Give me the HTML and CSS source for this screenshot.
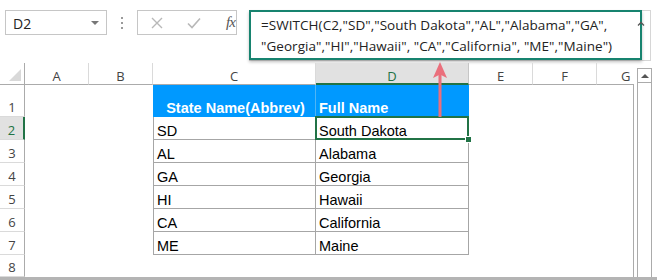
FILE: index.html
```html
<!DOCTYPE html>
<html lang="en">
<head>
  <meta charset="UTF-8" />
  <meta name="viewport" content="width=device-width, initial-scale=1.0" />
  <title>SWITCH function example</title>
  <link rel="stylesheet" href="styles.css">
</head>
<body>
  <div class="window">
    <!-- name box, buttons and formula bar -->
    <div class="toolbar">
      <div class="namebox">
        <span>D2</span>
        <span class="drop"></span>
      </div>
      <div class="grip"><i></i><i></i><i></i></div>
      <div class="fnbox">
        <svg class="btn" width="12" height="12" viewBox="0 0 12 12">
          <path d="M1 1 L11 11 M11 1 L1 11" stroke="#b8b8b8" stroke-width="1.4" fill="none" />
        </svg>
        <svg class="btn" width="14" height="12" viewBox="0 0 14 12">
          <path d="M1 6.5 L5 10.5 L13 1.5" stroke="#b8b8b8" stroke-width="1.6" fill="none" />
        </svg>
        <span class="fx">fx</span>
      </div>
      <div class="formula">
        <div class="formula-text">=SWITCH(C2,"SD","South Dakota","AL","Alabama","GA",<br>"Georgia","HI","Hawaii", "CA","California", "ME","Maine")</div>
        <svg class="expand" width="8" height="5" viewBox="0 0 8 5">
          <path d="M1 4.5 L4 1.5 L7 4.5" stroke="#555" stroke-width="1.3" fill="none" />
        </svg>
      </div>
    </div>

    <!-- worksheet -->
    <div class="sheet">
      <div class="grid">
        <div class="corner"><span class="tri"></span></div>
        <div class="colhead">A</div>
        <div class="colhead">B</div>
        <div class="colhead">C</div>
        <div class="colhead active">D</div>
        <div class="colhead">E</div>
        <div class="colhead">F</div>
        <div class="colhead last">G</div>

        <div class="rowhead tall">1</div>
        <div class="cell"></div>
        <div class="cell"></div>
        <div class="cell blue center">State Name(Abbrev)</div>
        <div class="cell blue">Full Name</div>
        <div class="cell"></div>
        <div class="cell"></div>
        <div class="cell"></div>

        <div class="rowhead active">2</div>
        <div class="cell"></div>
        <div class="cell"></div>
        <div class="cell abbr">SD</div>
        <div class="cell full sel">South Dakota</div>
        <div class="cell"></div>
        <div class="cell"></div>
        <div class="cell"></div>

        <div class="rowhead">3</div>
        <div class="cell"></div>
        <div class="cell"></div>
        <div class="cell abbr">AL</div>
        <div class="cell full">Alabama</div>
        <div class="cell"></div>
        <div class="cell"></div>
        <div class="cell"></div>

        <div class="rowhead">4</div>
        <div class="cell"></div>
        <div class="cell"></div>
        <div class="cell abbr">GA</div>
        <div class="cell full">Georgia</div>
        <div class="cell"></div>
        <div class="cell"></div>
        <div class="cell"></div>

        <div class="rowhead">5</div>
        <div class="cell"></div>
        <div class="cell"></div>
        <div class="cell abbr">HI</div>
        <div class="cell full">Hawaii</div>
        <div class="cell"></div>
        <div class="cell"></div>
        <div class="cell"></div>

        <div class="rowhead">6</div>
        <div class="cell"></div>
        <div class="cell"></div>
        <div class="cell abbr">CA</div>
        <div class="cell full">California</div>
        <div class="cell"></div>
        <div class="cell"></div>
        <div class="cell"></div>

        <div class="rowhead">7</div>
        <div class="cell"></div>
        <div class="cell"></div>
        <div class="cell abbr">ME</div>
        <div class="cell full">Maine</div>
        <div class="cell"></div>
        <div class="cell"></div>
        <div class="cell"></div>

        <div class="rowhead short">8</div>
        <div class="cell"></div>
        <div class="cell"></div>
        <div class="cell"></div>
        <div class="cell"></div>
        <div class="cell"></div>
        <div class="cell"></div>
        <div class="cell"></div>
      </div>

      <div class="vscroll">
        <div class="up"><span></span></div>
        <div class="track"></div>
      </div>

      <!-- pointer from the formula to the result cell -->
      <svg class="arrow" width="16" height="56" viewBox="0 0 16 56">
        <rect x="6.5" y="12" width="3" height="43" fill="#ea6f7c" />
        <path d="M8 0 L15 16 L8 12.5 L1 16 Z" fill="#ea6f7c" />
      </svg>
    </div>
  </div>
</body>
</html>
```

FILE: styles.css
```css
body {
  margin: 0;
  background: #ffffff;
  font-family: "Open Sans", "Noto Sans", sans-serif;
  color: #222;
  overflow: hidden;
}

.window {
  width: 657px;
  height: 280px;
}

/* ---------- toolbar ---------- */

.toolbar {
  height: 63px;
  display: flex;
  align-items: flex-start;
  padding-top: 10px;
  box-sizing: border-box;
}

.namebox {
  margin-left: 5px;
  width: 102px;
  height: 25px;
  box-sizing: border-box;
  border: 1px solid #c6c6c6;
  display: flex;
  align-items: center;
  justify-content: space-between;
  padding: 1px 7px 0 7px;
  font-size: 14px;
}

.drop {
  width: 0;
  height: 0;
  border-left: 4px solid transparent;
  border-right: 4px solid transparent;
  border-top: 4px solid #777;
}

.grip {
  width: 30px;
  height: 25px;
  display: flex;
  flex-direction: column;
  align-items: center;
  justify-content: center;
  gap: 3px;
}

.grip i {
  width: 2px;
  height: 2px;
  background: #9a9a9a;
}

.fnbox {
  width: 100px;
  height: 25px;
  box-sizing: border-box;
  border: 1px solid #c6c6c6;
  display: flex;
  align-items: center;
  padding-left: 13px;
}

.btn {
  margin-right: 24px;
}

.btn + .btn {
  margin-right: 25px;
}

.fx {
  font-family: "Liberation Serif", serif;
  font-style: italic;
  font-size: 15px;
  color: #555;
  letter-spacing: -1px;
}

.formula {
  position: relative;
  margin-left: 12px;
  width: 402px;
  height: 51px;
  box-sizing: border-box;
  border: 1px solid #d6d6d6;
  border-left: 0;
}

.formula-text {
  width: 393px;
  height: 50px;
  margin-top: -1px;
  box-sizing: border-box;
  border: 2px solid #17836f;
  box-shadow: 0 2px 3px rgba(0, 0, 0, 0.25);
  padding: 3px 0 0 10px;
  font-size: 13.5px;
  line-height: 21px;
  letter-spacing: 0.05px;
  color: #222;
  white-space: nowrap;
  background: #fff;
}

.expand {
  position: absolute;
  left: 388px;
  top: 10px;
}

/* ---------- sheet ---------- */

.sheet {
  position: relative;
  display: flex;
  height: 217px;
  box-sizing: border-box;
  border-bottom: 3px solid #b4b4b4;
}

.grid {
  width: 634px;
  overflow: hidden;
  display: grid;
  grid-template-columns: 25px 64px 64px 163px 153px 64px 64px 60px;
  grid-template-rows: 22px 32px repeat(6, 23px) 22px;
  font-family: "Liberation Sans", Arial, sans-serif;
  font-size: 14.5px;
  color: #000;
}

.corner {
  position: relative;
  border-right: 1px solid #ababab;
  border-bottom: 1px solid #ababab;
}

.tri {
  position: absolute;
  right: 3px;
  bottom: 3px;
  width: 0;
  height: 0;
  border-left: 12px solid transparent;
  border-bottom: 12px solid #d9d9d9;
}

.colhead {
  font-family: "Open Sans", "Noto Sans", sans-serif;
  font-size: 13px;
  color: #444;
  display: flex;
  align-items: center;
  justify-content: center;
  box-sizing: border-box;
  border-bottom: 1px solid #ababab;
  border-right: 1px solid #dadada;
  padding-top: 5px;
}

.colhead.active {
  background: #e1e1e1;
  color: #217346;
  border-bottom: 2px solid #217346;
  border-right-color: #c6c6c6;
  padding-top: 6px;
}

.colhead.last {
  border-right: 0;
  justify-content: flex-start;
  padding-left: 24px;
}

.rowhead {
  font-family: "Open Sans", "Noto Sans", sans-serif;
  font-size: 13px;
  color: #444;
  display: flex;
  align-items: flex-end;
  justify-content: center;
  padding-bottom: 0;
  box-sizing: border-box;
  border-right: 1px solid #ababab;
  border-bottom: 1px solid #dadada;
}

.rowhead.active {
  background: #e1e1e1;
  color: #217346;
  border-right: 2px solid #217346;
}

.cell {
  box-sizing: border-box;
  display: flex;
  align-items: flex-end;
  padding: 0 0 0 3px;
  white-space: nowrap;
}

.blue {
  background: #0099ff;
  color: #fff;
  font-weight: bold;
  padding-bottom: 1px;
}

.blue.center {
  justify-content: center;
  border-right: 1px solid #4fb5f5;
}

.abbr {
  border-left: 1px solid #a6a6a6;
  border-right: 1px solid #a6a6a6;
  border-bottom: 1px solid #a6a6a6;
}

.full {
  border-right: 1px solid #a6a6a6;
  border-bottom: 1px solid #a6a6a6;
}

.sel {
  position: relative;
}

.sel::before {
  content: "";
  position: absolute;
  left: -1px;
  top: -1px;
  right: -1px;
  bottom: -1px;
  border: 2px solid #217346;
}

.sel::after {
  content: "";
  position: absolute;
  right: -4px;
  bottom: -4px;
  width: 5px;
  height: 5px;
  background: #217346;
  border: 1px solid #fff;
}

.vscroll {
  position: relative;
  width: 15px;
  margin-left: 3px;
  display: flex;
  flex-direction: column;
  padding-top: 5px;
  box-sizing: border-box;
}

.vscroll::before {
  content: "";
  position: absolute;
  left: -4px;
  top: 22px;
  bottom: 0;
  border-left: 1px solid #ababab;
}

.up {
  height: 15px;
  box-sizing: border-box;
  border: 1px solid #ababab;
  display: flex;
  align-items: center;
  justify-content: center;
}

.up span {
  width: 0;
  height: 0;
  border-left: 4px solid transparent;
  border-right: 4px solid transparent;
  border-bottom: 4px solid #555;
}

.track {
  flex: 1;
  border-left: 1px solid #ababab;
  border-right: 1px solid #ababab;
}

.arrow {
  position: absolute;
  left: 432px;
  top: -1px;
}
```
